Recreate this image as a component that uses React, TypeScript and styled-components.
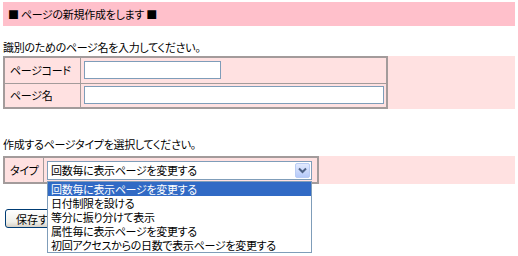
import styled, { createGlobalStyle } from "styled-components";

const GlobalStyle = createGlobalStyle`
    html, body {
        margin: 0;
        min-height: 256px;
        background: #ffffff;
    }
    body {
        font-family: "Noto Sans CJK JP", "Noto Sans", sans-serif;
        font-feature-settings: "palt";
        font-size: 11px;
        letter-spacing: -0.3px;
        color: #000000;
    }
`

const Page = styled.div`
    width: 512px;
    min-height: 254px;
    padding: 2px 0 0 3px;
`
const TitleBar = styled.div`
    height: 24px;
    background-color: #ffc0cb;
    display: flex;
    align-items: center;
    padding-left: 5px;
`
const Guide = styled.p<{ $top: number }>`
    margin: ${p => p.$top}px 0 0 0;
    height: 16px;
    line-height: 16px;
`
const FormBand = styled.div<{ $top: number }>`
    margin-top: ${p => p.$top}px;
    background-color: #ffe1e1;
    display: flex;
    align-items: flex-start;
`
const FormTable = styled.table<{ $width: number }>`
    width: ${p => p.$width}px;
    border-collapse: collapse;
    border: 2px solid #a39b9b;
`
const Row = styled.tr<{ $height: number }>`
    height: ${p => p.$height}px;
`
const LabelCell = styled.td<{ $width: number }>`
    width: ${p => p.$width}px;
    padding: 0 0 0 5px;
    border: 1px solid #a39b9b;
    white-space: nowrap;
    vertical-align: middle;
`
const FieldCell = styled.td`
    padding: 0 0 0 3px;
    border: 1px solid #a39b9b;
    vertical-align: middle;
`
const TextInput = styled.input<{ $width: number }>`
    display: block;
    box-sizing: border-box;
    width: ${p => p.$width}px;
    height: 18px;
    border: 1px solid #7f9db9;
    background: #ffffff;
    padding: 0 2px;
    font: inherit;
    outline: none;
`
const SelectWrap = styled.div`
    position: relative;
    width: 265px;
`
const SelectBox = styled.div`
    box-sizing: border-box;
    height: 19px;
    border: 1px solid #7f9db9;
    background: #ffffff;
    display: flex;
    align-items: center;
    justify-content: space-between;
    padding: 0 1px 0 3px;
`
const ArrowButton = styled.span`
    width: 15px;
    height: 15px;
    box-sizing: border-box;
    border: 1px solid #b9ccf4;
    border-radius: 2px;
    background: linear-gradient(#e2eafe, #b5c9f9);
    display: flex;
    align-items: center;
    justify-content: center;
`
const OptionList = styled.ul`
    position: absolute;
    left: 0;
    top: 20px;
    z-index: 10;
    box-sizing: border-box;
    width: 265px;
    margin: 0;
    padding: 0;
    list-style: none;
    background: #ffffff;
    border: 1px solid #7f9db9;
`
const OptionItem = styled.li<{ $selected?: boolean }>`
    height: 14.2px;
    line-height: 14px;
    padding-left: 3px;
    white-space: nowrap;
    color: ${p => (p.$selected ? "#ffffff" : "#000000")};
    background: ${p => (p.$selected ? "#316ac5" : "transparent")};
`
const SaveButton = styled.button`
    margin: 25px 0 0 2px;
    height: 19px;
    padding: 0 10px;
    font: inherit;
    border: 1px solid #003c74;
    border-radius: 3px;
    background: linear-gradient(#ffffff, #f0f0ea 70%, #d6d0c5);
    color: #000000;
`

const pageTypes = [
    "回数毎に表示ページを変更する",
    "日付制限を設ける",
    "等分に振り分けて表示",
    "属性毎に表示ページを変更する",
    "初回アクセスからの日数で表示ページを変更する",
]

export default function App() {
    return (
        <Page>
            <GlobalStyle />
            <TitleBar>■ ページの新規作成をします ■</TitleBar>
            <Guide $top={13}>識別のためのページ名を入力してください。</Guide>
            <FormBand $top={1}>
                <FormTable $width={385}>
                    <tbody>
                        <Row $height={26}>
                            <LabelCell $width={70}>ページコード</LabelCell>
                            <FieldCell><TextInput $width={137} /></FieldCell>
                        </Row>
                        <Row $height={25}>
                            <LabelCell $width={70}>ページ名</LabelCell>
                            <FieldCell><TextInput $width={300} /></FieldCell>
                        </Row>
                    </tbody>
                </FormTable>
            </FormBand>
            <Guide $top={27}>作成するページタイプを選択してください。</Guide>
            <FormBand $top={4}>
                <FormTable $width={316}>
                    <tbody>
                        <Row $height={26}>
                            <LabelCell $width={33}>タイプ</LabelCell>
                            <FieldCell>
                                <SelectWrap>
                                    <SelectBox>
                                        <span>{pageTypes[0]}</span>
                                        <ArrowButton>
                                            <svg width="9" height="7" viewBox="0 0 9 7">
                                                <path d="M1 1.5 L4.5 5 L8 1.5" fill="none" stroke="#4d6185" strokeWidth="2" />
                                            </svg>
                                        </ArrowButton>
                                    </SelectBox>
                                    <OptionList>
                                        {pageTypes.map((t, i) => (
                                            <OptionItem key={i} $selected={i === 0}>{t}</OptionItem>
                                        ))}
                                    </OptionList>
                                </SelectWrap>
                            </FieldCell>
                        </Row>
                    </tbody>
                </FormTable>
            </FormBand>
            <SaveButton>保存する</SaveButton>
        </Page>
    )
}
